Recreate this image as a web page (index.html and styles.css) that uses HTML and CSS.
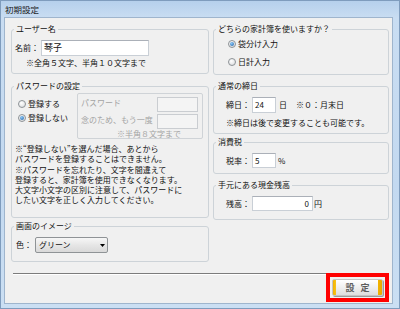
FILE: index.html
```html
<!DOCTYPE html>
<html lang="ja">
<head>
<meta charset="utf-8">
<title>初期設定</title>
<link rel="stylesheet" href="styles.css">
</head>
<body>
<div class="window">
  <div class="titlebar">初期設定</div>
  <div class="client">
    <div class="columns">
      <div class="col">
        <fieldset class="grp g-user">
          <legend>ユーザー名</legend>
          <div class="field-row row-left">
            <span class="lbl">名前：</span>
            <span class="tb tb-name">琴子</span>
          </div>
          <p class="note note-user">※全角５文字、半角１０文字まで</p>
        </fieldset>
        <fieldset class="grp g-pass">
          <legend>パスワードの設定</legend>
          <div class="pass-top">
            <div class="radios">
              <div class="radio-row"><span class="radio"></span>登録する</div>
              <div class="radio-row"><span class="radio on"></span>登録しない</div>
            </div>
            <div class="pass-box">
              <span class="dis">パスワード</span><span class="tb tb-dis"></span>
              <span class="dis">念のため、もう一度</span><span class="tb tb-dis"></span>
              <span class="dis pass-note">※半角８文字まで</span>
            </div>
          </div>
          <p class="para p1">※“登録しない”を選んだ場合、あとから<br>パスワードを登録することはできません。</p>
          <p class="para p2">※パスワードを忘れたり、文字を間違えて<br>登録すると、家計簿を使用できなくなります。<br>大文字小文字の区別に注意して、パスワードに<br>したい文字を正しく入力してください。</p>
        </fieldset>
        <fieldset class="grp g-theme">
          <legend>画面のイメージ</legend>
          <div class="field-row row-theme">
            <span class="lbl lbl-color">色：</span>
            <span class="select">グリーン<svg class="arrow" width="5" height="3" viewBox="0 0 5 3"><path d="M0 0H5L2.5 3Z" fill="#000"/></svg></span>
          </div>
        </fieldset>
      </div>
      <div class="col">
        <fieldset class="grp g-which">
          <legend>どちらの家計簿を使いますか？</legend>
          <div class="radio-row which-1"><span class="radio on"></span>袋分け入力</div>
          <div class="radio-row which-2"><span class="radio"></span>日計入力</div>
        </fieldset>
        <fieldset class="grp g-close">
          <legend>通常の締日</legend>
          <div class="field-row row-right">
            <span class="lbl">締日：</span>
            <span class="tb tb-small">24</span>
            <span class="unit">日</span>
            <span class="hint">※０：月末日</span>
          </div>
          <p class="note note-close">※締日は後で変更することも可能です。</p>
        </fieldset>
        <fieldset class="grp g-tax">
          <legend>消費税</legend>
          <div class="field-row row-right row-short">
            <span class="lbl">税率：</span>
            <span class="tb tb-small">5</span>
            <span class="unit unit-pct">%</span>
          </div>
        </fieldset>
        <fieldset class="grp g-cash">
          <legend>手元にある現金残高</legend>
          <div class="field-row row-right row-short">
            <span class="lbl">残高：</span>
            <span class="tb tb-cash">0</span>
            <span class="unit unit-yen">円</span>
          </div>
        </fieldset>
      </div>
    </div>
    <div class="footer">
      <div class="sep"></div>
      <div class="actions">
        <div class="highlight"><button class="btn" type="button">設 定</button></div>
      </div>
    </div>
  </div>
</div>
</body>
</html>
```
FILE: styles.css
```css
* { box-sizing: border-box; }
html, body { margin: 0; padding: 0; }
body {
  width: 400px;
  height: 309px;
  overflow: hidden;
  font-family: "Noto Sans CJK JP", "Noto Sans", sans-serif;
  font-size: 8px;
  line-height: 10px;
  color: #111;
  background: #fff;
}
p { margin: 0; }

.window {
  width: 400px;
  height: 309px;
  display: flex;
  flex-direction: column;
  padding: 0 7px 5px 4px;
  border: 1px solid #7f9cbd;
  background: linear-gradient(to bottom, #b6d0ec 0, #c9ddf2 17px, #c3d9f0 60%, #cbdff3 100%);
}
.titlebar {
  height: 17px;
  line-height: 17px;
  padding-left: 0;
  font-size: 8.5px;
  color: #1a1a1a;
  white-space: nowrap;
}
.client {
  flex: 1;
  background: #f0f0f0;
  box-shadow: 0 0 0 1px #9fb5cd;
  display: flex;
  flex-direction: column;
}

.columns {
  display: grid;
  grid-template-columns: 198px 176px;
  column-gap: 4px;
  padding: 6px 0 0 6px;
}
.col { display: flex; flex-direction: column; }

.grp {
  margin: 0;
  padding: 0;
  min-width: 0;
  border: 1px solid #cdd3d8;
  border-radius: 3px;
}
.grp legend {
  margin-left: 2px;
  padding: 0 2px;
  font-size: 8px;
  line-height: 10px;
  white-space: nowrap;
}

.g-user { height: 50px; }
.g-pass { height: 137px; margin-top: 7px; }
.g-theme { height: 41px; margin-top: 3px; }
.g-which { height: 51px; }
.g-close { height: 53px; margin-top: 6px; }
.g-tax { height: 37px; margin-top: 3px; }
.g-cash { height: 40px; margin-top: 6px; }

.field-row {
  display: flex;
  align-items: center;
  height: 16px;
  margin-top: 6px;
  white-space: nowrap;
}
.row-left { padding-left: 3px; }
.row-right { padding-left: 12px; }
.row-short { height: 15px; }
.row-theme { padding-left: 4px; }
.lbl { width: 26px; flex: none; }
.lbl-color { width: 19px; }

.tb {
  display: inline-flex;
  align-items: center;
  height: 100%;
  background: #fff;
  border: 1px solid #c9cfd6;
  border-top-color: #abb0b8;
  flex: none;
}
.tb-name { width: 108px; padding-left: 2px; font-size: 9px; }
.tb-small { width: 24px; padding-left: 2px; }
.tb-cash { width: 61px; justify-content: flex-end; padding-right: 3px; }
.tb-dis { height: 15px; background: #f4f4f4; border-color: #cacdd1; }

.unit { margin-left: 3px; }
.unit-pct { margin-left: 2px; }
.unit-yen { margin-left: 1px; }
.hint { margin-left: 9px; }

.note { white-space: nowrap; line-height: 10px; }
.note-user { margin-top: 2px; padding-left: 14px; }
.note-close { margin-top: 5px; padding-left: 12px; }

/* radios */
.radio-row {
  display: flex;
  align-items: center;
  gap: 2px;
  height: 14px;
  white-space: nowrap;
}
.radio {
  position: relative;
  width: 8px;
  height: 8px;
  flex: none;
  border-radius: 50%;
  border: 1px solid #8d9296;
  background: radial-gradient(circle at 40% 35%, #ffffff, #d6d8da);
}
.radio.on::after {
  content: "";
  position: absolute;
  left: 1px;
  top: 1px;
  width: 4px;
  height: 4px;
  border-radius: 50%;
  background: radial-gradient(circle at 40% 35%, #8cc8f6, #1d5ea6);
}
.which-1 { margin-top: 3px; padding-left: 14px; }
.which-2 { margin-top: 4px; padding-left: 14px; }

/* password */
.pass-top { display: flex; }
.radios { width: 65px; flex: none; padding: 6px 0 0 6px; }
.pass-box {
  width: 126px;
  height: 46px;
  margin-top: 2px;
  flex: none;
  border: 1px solid #cfd3d7;
  border-radius: 2px;
  display: grid;
  grid-template-columns: 1fr 41px;
  grid-auto-rows: 15px;
  row-gap: 2px;
  padding: 3px 4px 0 3px;
  align-items: start;
}
.dis { color: #a3a3a3; line-height: 11px; white-space: nowrap; }
.pass-note { grid-column: 1 / -1; padding-left: 36px; margin-top: -2px; line-height: 9px; }

.para { white-space: nowrap; line-height: 10px; padding-left: 3px; }
.p1 { margin-top: 5px; }
.p2 { margin-top: 1px; }

/* select */
.select {
  display: flex;
  align-items: center;
  width: 73px;
  height: 16px;
  padding: 0 1px 0 3px;
  border: 1px solid #8f9396;
  border-radius: 2px;
  background: linear-gradient(to bottom, #f7f7f7, #e6e6e6 50%, #d9d9d9);
}
.arrow { margin-left: auto; margin-right: 1px; }

/* footer */
.footer { margin-top: 11px; }
.sep {
  margin-left: 8px;
  width: 372px;
  height: 2px;
  border-top: 1px solid #7c7c7c;
  border-bottom: 1px solid #ffffff;
}
.actions {
  display: flex;
  justify-content: flex-end;
  padding-right: 3px;
  margin-top: -2px;
}
.highlight {
  border: 4px solid #ff0000;
  padding: 2px;
}
.btn {
  display: block;
  width: 51px;
  height: 17px;
  margin: 0;
  padding: 0;
  font-family: "Noto Sans CJK JP", sans-serif;
  font-size: 9px;
  font-weight: bold;
  line-height: 15px;
  color: #5c5c5c;
  word-spacing: 4px;
  border: 1px solid #c4c4c4;
  border-radius: 2px;
  background:
    linear-gradient(to right, #f2b300 0, #f7c21a 3px, transparent 3px, transparent calc(100% - 4px), #f2b300 calc(100% - 4px), #e8a800 100%),
    linear-gradient(to bottom, #ffffff, #ececec 60%, #dedede);
  box-shadow: 1px 1px 0 #9a9a9a;
}
```
